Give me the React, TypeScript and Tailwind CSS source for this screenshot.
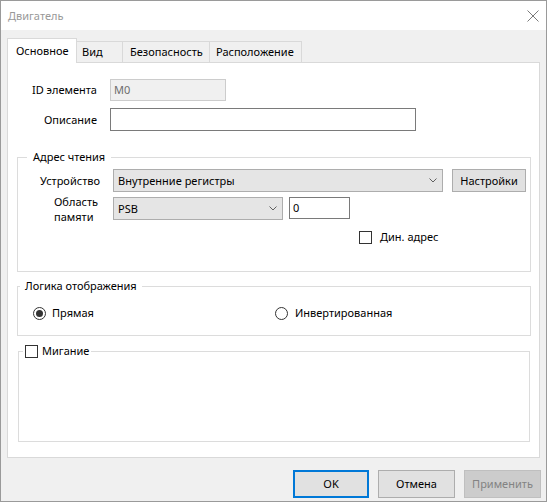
import type { ReactNode } from 'react'

const font = { fontFamily: '"Noto Sans", "Liberation Sans", sans-serif' }

function Chevron() {
  return (
    <svg width="8" height="5" viewBox="0 0 8 5" className="shrink-0">
      <path d="M0.5 0.5 L4 4 L7.5 0.5" fill="none" stroke="#606060" strokeWidth="1" />
    </svg>
  )
}

function Select({ value, width }: { value: string; width: string }) {
  return (
    <div className={`${width} h-[23px] flex items-center justify-between pl-[4px] pr-[5px] bg-[#e5e5e5] border border-[#adadad]`}>
      <span>{value}</span>
      <Chevron />
    </div>
  )
}

function Checkbox() {
  return <span className="w-[13px] h-[13px] border border-[#333333] bg-white shrink-0" />
}

function Radio({ checked }: { checked?: boolean }) {
  return (
    <span className="w-[13px] h-[13px] rounded-full border border-[#333333] bg-white shrink-0 flex items-center justify-center">
      {checked && <span className="w-[7px] h-[7px] rounded-full bg-[#333333]" />}
    </span>
  )
}

function Group({ legend, className, children }: { legend: ReactNode; className: string; children: ReactNode }) {
  return (
    <fieldset className={`border border-[#dcdcdc] ${className}`}>
      {legend}
      {children}
    </fieldset>
  )
}

function Tab({ label, active, className }: { label: string; active?: boolean; className: string }) {
  if (active) {
    return (
      <div className={`h-[25px] -mb-px relative z-10 bg-white border border-b-0 border-[#d9d9d9] flex items-center ${className}`}>
        {label}
      </div>
    )
  }
  return (
    <div className={`h-[21px] border border-b-0 border-l-0 border-[#d9d9d9] flex items-center whitespace-nowrap ${className}`}>
      {label}
    </div>
  )
}

export default function App() {
  return (
    <div className="w-[547px] h-[502px] border border-[#9a9a9a] flex flex-col text-[11px] leading-[16px] text-black" style={font}>
      <div className="h-[29px] bg-white flex items-center justify-between pl-[7px] pr-[7px] shrink-0">
        <span className="text-[#999999]">Двигатель</span>
        <svg width="12" height="12" viewBox="0 0 12 12">
          <path d="M0.5 0.5 L11.5 11.5 M11.5 0.5 L0.5 11.5" stroke="#7a7a7a" strokeWidth="1" />
        </svg>
      </div>

      <div className="flex-1 bg-[#f0f0f0] pl-[6px] pr-[6px] pt-[8px] flex flex-col">
        <div className="flex items-end">
          <Tab label="Основное" active className="w-[70px] pl-[8px]" />
          <Tab label="Вид" className="w-[46px] pl-[5px]" />
          <Tab label="Безопасность" className="w-[87px] pl-[7px]" />
          <Tab label="Расположение" className="w-[92px] pl-[6px]" />
        </div>

        <div className="bg-white border border-[#d9d9d9] pt-[16px] pb-[15px] flex flex-col">
          <div className="flex items-center gap-[13px]">
            <span className="w-[89px] text-right">ID элемента</span>
            <div className="w-[116px] h-[22px] bg-[#f0f0f0] border border-[#cccccc] pl-[3px] flex items-center text-[#6d6d6d]">M0</div>
          </div>
          <div className="flex items-center gap-[13px] mt-[7px]">
            <span className="w-[89px] text-right">Описание</span>
            <div className="w-[306px] h-[23px] bg-white border border-[#7a7a7a]" />
          </div>

          <Group
            className="mt-[18px] ml-[9px] mr-[8px] pb-[26px]"
            legend={<legend className="ml-[9px] px-[6px]">Адрес чтения</legend>}
          >
            <div className="flex items-center pt-[4px]">
              <span className="w-[82px] text-right">Устройство</span>
              <div className="ml-[13px] flex gap-[9px]">
                <Select value="Внутренние регистры" width="w-[330px]" />
                <div className="w-[74px] h-[23px] bg-[#e1e1e1] border border-[#adadad] flex items-center justify-center">Настройки</div>
              </div>
            </div>
            {/* two-line label hangs past the row's 22px height */}
            <div className="flex items-start h-[22px] mt-[5px]">
              <div className="w-[82px] flex justify-end -mt-[3px]">
                <div className="w-[46px] leading-[15px]">
                  Область
                  <br />
                  памяти
                </div>
              </div>
              <div className="ml-[13px] flex gap-[6px]">
                <Select value="PSB" width="w-[170px]" />
                <div className="w-[61px] h-[22px] bg-white border border-[#7a7a7a] pl-[3px] flex items-center">0</div>
              </div>
            </div>
            <div className="flex items-center gap-[8px] mt-[10px] pl-[341px]">
              <Checkbox />
              <span>Дин. адрес</span>
            </div>
          </Group>

          <Group
            className="mt-[6px] ml-[9px] mr-[8px] pt-[11px] pb-[14px]"
            legend={<legend className="ml-[2px] px-[5px]">Логика отображения</legend>}
          >
            <div className="flex items-center pl-[15px]">
              <div className="w-[242px] flex items-center gap-[6px]">
                <Radio checked />
                <span>Прямая</span>
              </div>
              <div className="flex items-center gap-[7px]">
                <Radio />
                <span>Инвертированная</span>
              </div>
            </div>
          </Group>

          <Group
            className="mt-[7px] ml-[10px] mr-[9px] h-[99px]"
            legend={
              <legend className="ml-[4px] px-[2px]">
                <span className="flex items-center gap-[4px]">
                  <Checkbox />
                  <span>Мигание</span>
                </span>
              </legend>
            }
          >
            <div />
          </Group>
        </div>

        <div className="flex justify-end gap-[9px] mt-[12px] -mr-px">
          <button className="w-[76px] h-[28px] bg-[#e1e1e1] border-2 border-[#0078d7]">OK</button>
          <button className="w-[77px] h-[28px] bg-[#e1e1e1] border border-[#adadad]">Отмена</button>
          <button className="w-[77px] h-[28px] bg-[#cccccc] border border-[#bfbfbf] text-[#838383]">Применить</button>
        </div>
      </div>
    </div>
  )
}
